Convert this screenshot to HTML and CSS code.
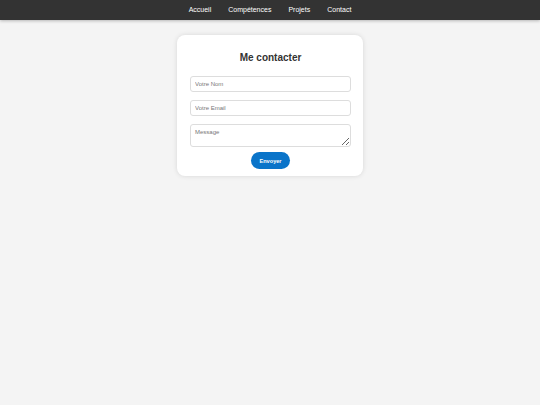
FILE: index.html
```html
<!DOCTYPE html>
<html lang="fr">
<head>
<meta charset="utf-8">
<title>Me contacter</title>
<link rel="stylesheet" href="styles.css">
</head>
<body>
<nav class="nav">
  <a class="nav-link" href="#">Accueil</a>
  <a class="nav-link" href="#">Compétences</a>
  <a class="nav-link" href="#">Projets</a>
  <a class="nav-link" href="#">Contact</a>
</nav>
<main class="main">
  <section class="card">
    <h2 class="title">Me contacter</h2>
    <form class="form">
      <input class="field" type="text" placeholder="Votre Nom">
      <input class="field" type="email" placeholder="Votre Email">
      <textarea class="field area" placeholder="Message"></textarea>
      <button class="btn" type="button">Envoyer</button>
    </form>
  </section>
</main>
</body>
</html>
```
FILE: styles.css
```css
html, body {
  margin: 0;
  padding: 0;
}
body {
  background: #f4f4f4;
  font-family: "Liberation Sans", Arial, sans-serif;
  color: #333;
  min-height: 405px;
}
.nav {
  height: 20px;
  background: #333;
  display: flex;
  justify-content: center;
  align-items: center;
  gap: 17px;
  box-shadow: 0 1px 3px rgba(0,0,0,0.25);
}
.nav-link {
  color: #fff;
  text-decoration: none;
  font-size: 7px;
  line-height: 20px;
}
.main {
  display: flex;
  justify-content: center;
  padding-top: 15px;
}
.card {
  width: 186px;
  box-sizing: border-box;
  background: #fff;
  border-radius: 8px;
  box-shadow: 0 0 5px rgba(0,0,0,0.12);
  padding: 16px 12px 7px 13px;
}
.title {
  margin: 0 0 11px;
  font-size: 10px;
  line-height: 14px;
  text-align: center;
  font-weight: bold;
  color: #333;
}
.form {
  display: flex;
  flex-direction: column;
  align-items: center;
}
.field {
  display: block;
  width: 161px;
  height: 16px;
  box-sizing: border-box;
  margin: 0 0 8px;
  padding: 0 4px;
  border: 1px solid #ddd;
  border-radius: 3px;
  font-family: "Liberation Sans", Arial, sans-serif;
  font-size: 6px;
  color: #333;
  background: #fff;
  outline: none;
}
.field::placeholder {
  color: #777;
}
.area {
  height: 23px;
  padding: 4px 4px;
  margin-bottom: 5px;
  resize: vertical;
}
.btn {
  width: 39px;
  height: 17px;
  border: none;
  border-radius: 9px;
  background: #0a74c9;
  color: #fff;
  font-family: "Liberation Sans", Arial, sans-serif;
  font-weight: bold;
  font-size: 5.6px;
  padding: 0;
  cursor: pointer;
}
```
